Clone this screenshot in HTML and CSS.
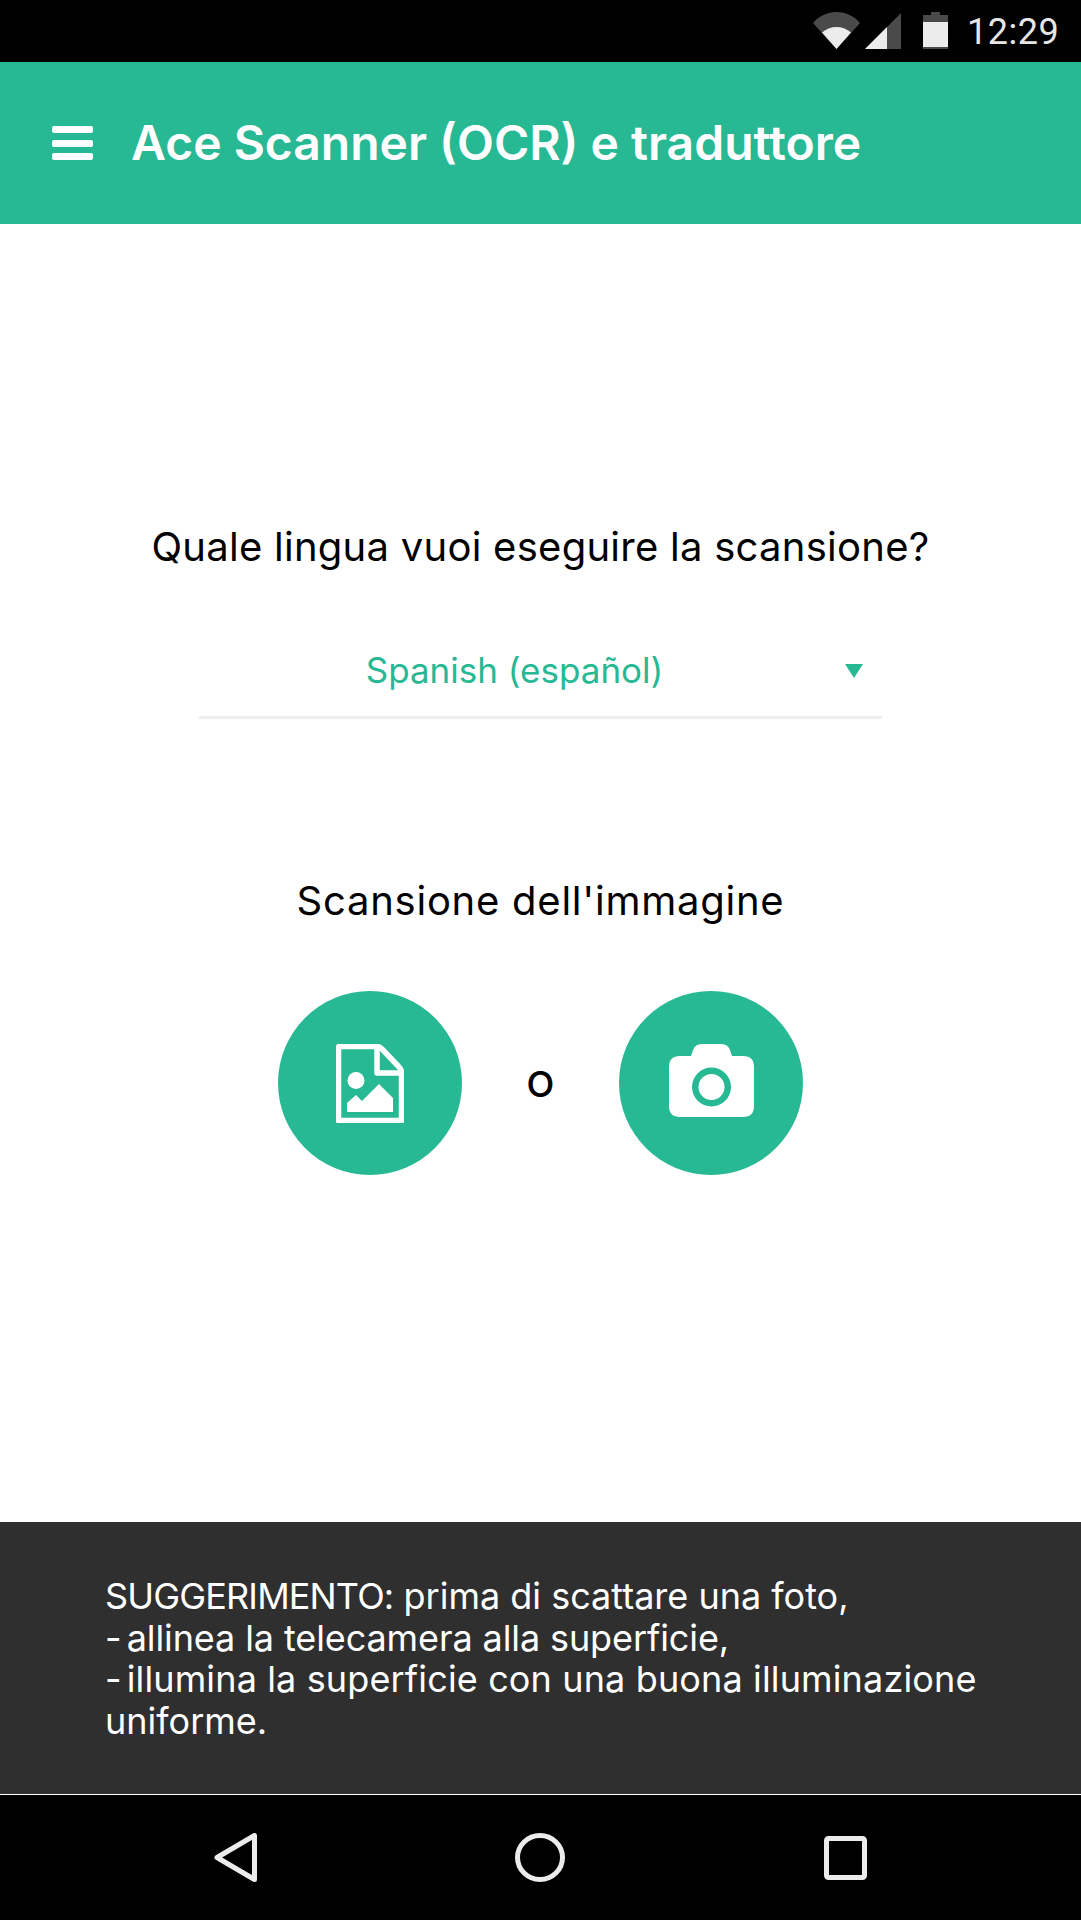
FILE: index.html
```html
<!DOCTYPE html>
<html lang="it">
<head>
<meta charset="utf-8">
<title>Ace Scanner (OCR) e traduttore</title>
<link rel="stylesheet" href="styles.css">
</head>
<body>
<div class="screen">
  <div class="statusbar">
    <svg class="st-wifi" viewBox="0 0 47 37"><path d="M0 11C6 4 14 0 23.500 0S41 4 47 11L23.500 37Z" fill="#4a4a4a"/><path d="M9 20.500C13 17 18 15 23.500 15S34 17 38 20.500L23.500 37Z" fill="#ececec"/></svg>
    <svg class="st-signal" viewBox="0 0 36 36"><path d="M36 0V36H0Z" fill="#4a4a4a"/><path d="M22 14V36H0Z" fill="#ececec"/></svg>
    <svg class="st-battery" viewBox="0 0 25 37"><path d="M8 0H17V3H25V37H0V3H8Z" fill="#4a4a4a"/><rect x="0" y="10" width="25" height="25" fill="#ececec"/></svg>
    <span class="st-time">12:29</span>
  </div>
  <header class="appbar">
    <div class="menu"><i></i><i></i><i></i></div>
    <h1 class="title">Ace Scanner (OCR) e traduttore</h1>
  </header>
  <main class="content">
    <p class="label question">Quale lingua vuoi eseguire la scansione?</p>
    <div class="spinner">
      <span class="spinner-text">Spanish (español)</span>
      <span class="spinner-arrow"></span>
    </div>
    <p class="label scan">Scansione dell'immagine</p>
    <div class="actions">
      <button class="fab" type="button" aria-label="Immagine">
        <svg viewBox="0 0 68 79" class="ic-doc">
          <path d="M3 2.500H41Q44 2.500 46 5L63 23Q65.500 25.500 65.500 29V76.500H2.500V3Z" fill="none" stroke="#fff" stroke-width="5.500" stroke-linejoin="round"/>
          <path d="M41 3V29H65" fill="none" stroke="#fff" stroke-width="5.500" stroke-linejoin="round"/>
          <ellipse cx="20" cy="36.500" rx="8.500" ry="8.500" fill="#fff"/>
          <path d="M11 68V59L20 51L26 57L43 40L57 54V68Z" fill="#fff"/>
        </svg>
      </button>
      <span class="or">o</span>
      <button class="fab" type="button" aria-label="Fotocamera">
        <svg viewBox="0 0 85 73" class="ic-cam">
          <path fill-rule="evenodd" fill="#fff" d="M11 12H22L24 6Q26 0 33 0H52Q59 0 61 6L63 12H74Q85 12 85 23V62Q85 73 74 73H11Q0 73 0 62V23Q0 12 11 12ZM42.500 23.500A19.500 19.500 0 1 0 42.500 62.500A19.500 19.500 0 1 0 42.500 23.500ZM42.500 30A13 13 0 1 1 42.500 56A13 13 0 1 1 42.500 30Z"/>
        </svg>
      </button>
    </div>
  </main>
  <section class="tip">
    <p><span class="tip-head">SUGGERIMENTO:</span> prima di scattare una foto,<br><span class="tip-dash">- </span><span class="tip-tight">allinea la telecamera alla superficie,</span><br><span class="tip-dash">- </span><span class="tip-loose">illumina la superficie con una buona illuminazione</span> uniforme.</p>
  </section>
  <nav class="navbar">
    <svg class="nav-back" viewBox="0 0 43 49"><path d="M40.500 2.500V46.500L3 24.500Z" fill="none" stroke="#ececec" stroke-width="5" stroke-linejoin="round"/></svg>
    <svg class="nav-home" viewBox="0 0 50 49"><ellipse cx="25" cy="24.500" rx="22.500" ry="22" fill="none" stroke="#ececec" stroke-width="5"/></svg>
    <svg class="nav-recent" viewBox="0 0 43 44"><rect x="2.500" y="2.500" width="38" height="39" rx="2" fill="none" stroke="#ececec" stroke-width="5"/></svg>
  </nav>
</div>
</body>
</html>
```
FILE: styles.css
```css
* { box-sizing: border-box; }
html, body { margin: 0; padding: 0; }
body { font-family: "Inter", "Open Sans", "Liberation Sans", sans-serif; background: #fff; }
.screen { width: 1081px; height: 1920px; display: flex; flex-direction: column; overflow: hidden; }

.statusbar { height: 62px; background: #000; display: flex; align-items: flex-start; padding-top: 12px; padding-left: 813px; }
.st-wifi { width: 47px; height: 37px; margin-right: 5px; }
.st-signal { width: 36px; height: 36px; margin-top: 1px; margin-right: 22px; }
.st-battery { width: 25px; height: 37px; margin-right: 19px; }
.st-time { font-family: Roboto, sans-serif; font-size: 36px; line-height: 42px; color: #e6e6e6; letter-spacing: 0.5px; margin-top: -1px; }

.appbar { height: 162px; background: #27b894; display: flex; align-items: center; padding-left: 52px; }
.menu { width: 41px; display: flex; flex-direction: column; gap: 6.500px; margin-right: 38px; }
.menu i { display: block; height: 7px; border-radius: 2px; background: #fff; }
.title { margin: 0 0 2px; font-size: 48px; font-weight: 600; color: #fff; white-space: nowrap; letter-spacing: 0; }

.content { flex: 1; display: flex; flex-direction: column; align-items: center; padding-top: 300px; }
.label { margin: 0; font-size: 40px; line-height: 46px; color: #000; text-align: center; white-space: nowrap; }
.question { letter-spacing: 0.26px; }
.spinner { width: 683px; height: 102px; margin-top: 47px; border-bottom: 3px solid #eee; display: flex; align-items: center; justify-content: center; position: relative; padding-right: 52px; }
.spinner-text { font-size: 35px; color: #27b894; margin-top: 6px; }
.spinner-arrow { position: absolute; left: 646px; top: 47px; width: 0; height: 0; border-left: 9.500px solid transparent; border-right: 9.500px solid transparent; border-top: 14px solid #27b894; }
.scan { margin-top: 159px; letter-spacing: 0.75px; }
.actions { display: flex; align-items: center; margin-top: 67px; }
.fab { width: 184px; height: 184px; border: 0; padding: 0; border-radius: 50%; background: #27b894; display: flex; align-items: center; justify-content: center; }
.ic-doc { width: 68px; height: 79px; }
.ic-cam { width: 85px; height: 73px; margin-top: -5px; }
.or { width: 157px; text-align: center; font-size: 48px; line-height: 48px; margin-top: -6px; color: #000; }

.tip { height: 273px; background: #2f2f2f; border-bottom: 1px solid #fff; padding: 54px 90px 0 105px; }
.tip p { margin: 0; font-size: 36px; line-height: 41.500px; color: #fff; }
.tip-head { letter-spacing: -0.85px; }
.tip-dash { letter-spacing: -2.5px; }
.tip-tight { letter-spacing: -0.1px; }
.tip-loose { letter-spacing: 0.14px; }

.navbar { height: 125px; background: #000; display: flex; align-items: flex-start; padding-top: 38px; padding-left: 214px; }
.nav-back { width: 43px; height: 49px; margin-right: 258px; }
.nav-home { width: 50px; height: 49px; margin-right: 259px; }
.nav-recent { width: 43px; height: 44px; margin-top: 3px; }
```
